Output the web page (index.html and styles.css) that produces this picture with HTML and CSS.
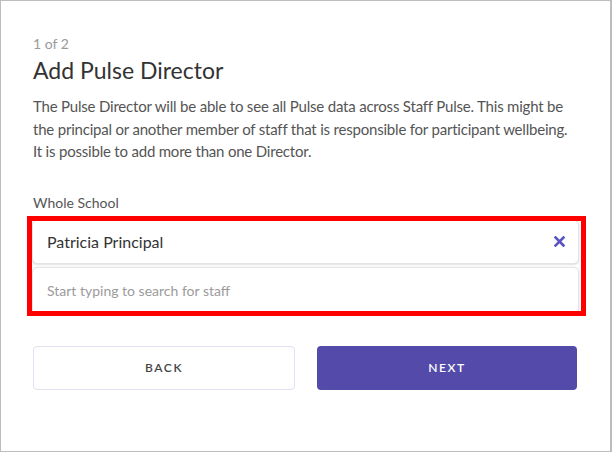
FILE: index.html
```html
<!DOCTYPE html>
<html>
<head>
<meta charset="utf-8">
<link rel="stylesheet" href="styles.css">
</head>
<body>
<div class="frame">
  <div class="step">1 of 2</div>
  <h1 class="title">Add Pulse Director</h1>
  <p class="desc">The Pulse Director will be able to see all Pulse data across Staff Pulse. This might be the principal or another member of staff that is responsible for participant wellbeing. It is possible to add more than one Director.</p>
  <div class="label">Whole School</div>
  <div class="highlight">
    <div class="field selected">
      <span class="name">Patricia Principal</span>
      <svg class="remove" width="11" height="11" viewBox="0 0 11 11"><path d="M1.5 1.5 L9.5 9.5 M9.5 1.5 L1.5 9.5" stroke="#5b52c4" stroke-width="2.6" stroke-linecap="square"/></svg>
    </div>
    <div class="field search">
      <span class="placeholder">Start typing to search for staff</span>
    </div>
  </div>
  <div class="actions">
    <div class="btn back">BACK</div>
    <div class="btn next">NEXT</div>
  </div>
</div>
</body>
</html>
```
FILE: styles.css
```css
* { box-sizing: border-box; }
html, body { margin: 0; padding: 0; background: #fff; }
body { font-family: "Lato", "Liberation Sans", sans-serif; }
.frame {
  width: 612px;
  height: 452px;
  border: 1px solid #bdbdbd;
  border-right-width: 2px;
  padding: 34px 32px 0 32px;
}
.step {
  font-size: 14px;
  line-height: 18px;
  color: #9a9a9a;
}
.title {
  margin: 2px 0 0 0;
  font-size: 23px;
  font-weight: 400;
  line-height: 30px;
  color: #333;
}
.desc {
  margin: 10px 0 0 0;
  font-size: 15px;
  line-height: 22.5px;
  letter-spacing: -0.2px;
  color: #555;
}
.label {
  margin-top: 31px;
  font-size: 14px;
  line-height: 18px;
  color: #555;
}
.highlight {
  margin: 4px -8px 0 -6px;
  border: 5px solid #f00;
  padding: 0 3px 0 1px;
  height: 100px;
  overflow: hidden;
}
.field {
  height: 42px;
  border-radius: 4px;
  box-shadow: 0 0 0 1px #e4e4e4, 0 1px 3px rgba(0,0,0,0.25);
  display: flex;
  align-items: center;
  padding: 0 13px 0 14px;
}
.field.selected { justify-content: space-between; }
.field.search { margin-top: 5px; height: 46px; }
.name { font-size: 16px; color: #333; }
.placeholder { font-size: 14px; color: #9b9b9b; }
.remove { display: block; }
.actions {
  margin-top: 30px;
  display: flex;
  gap: 22px;
  padding-right: 1px;
}
.btn {
  flex: 1;
  height: 44px;
  border-radius: 4px;
  display: flex;
  align-items: center;
  justify-content: center;
  font-size: 12px;
  font-weight: 600;
  letter-spacing: 1.6px;
}
.back { border: 1px solid #e3e1f1; color: #444; }
.next { background: #534aa9; color: #fff; }
```
